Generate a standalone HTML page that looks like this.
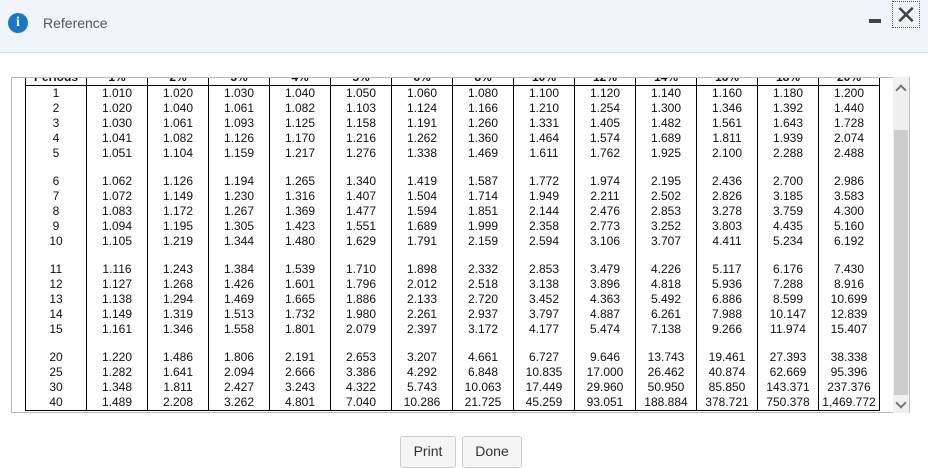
<!DOCTYPE html>
<html><head><style>
body{margin:0;width:928px;height:460px;background:#fff;font-family:"Liberation Sans",Arial,sans-serif;position:relative;overflow:hidden}
.hdr{position:absolute;left:0;top:0;width:928px;height:52px;background:#f0f5fc;border-bottom:1px solid #cfe0f2}
.ic{position:absolute;left:8px;top:13px;width:20px;height:20px;border-radius:50%;background:#1a76c8;color:#fff;font:bold 14px "Liberation Serif",serif;text-align:center;line-height:20px}
.ttl{position:absolute;left:43px;top:15px;font-size:14px;color:#555}
.min{position:absolute;left:869px;top:19px;width:12px;height:4px;background:#444}
.x{position:absolute;left:892px;top:1px;width:28px;height:27px;border:1px dotted #555;box-sizing:border-box;text-align:center;font-size:26px;line-height:26px;color:#444}
.box{position:absolute;left:11px;top:77px;width:899px;height:336px;border:1px solid #bbb;border-right:none;box-sizing:border-box;overflow:hidden}
.sb{position:absolute;left:893px;top:77px;width:17px;height:336px;background:#f0f0f0;border-right:1px solid #bbb;box-sizing:border-box}
.th{position:absolute;left:1px;top:53px;width:14px;height:265px;background:#cdcdcd}
table{position:absolute;left:13px;top:-7px;border-collapse:collapse;font-size:12px;color:#111}
td,th{width:60px;text-align:center;padding:0;border-left:1.5px solid #000;border-right:1.5px solid #000;height:15px;line-height:15px}
th{border-bottom:1.5px solid #000;height:14px;line-height:10px;vertical-align:bottom;font-weight:bold}
th span{position:relative;top:-3px}
tr.sp td{height:13px}
tr.last td{border-bottom:1.5px solid #000}
.btn{position:absolute;top:436px;height:30px;border:1px solid #ccc;border-radius:3px;background:#f5f5f5;font-size:14px;color:#333;text-align:center;line-height:28px}
.ar{position:absolute;left:4px;width:6px;height:6px;border-left:2px solid #777;border-top:2px solid #777}
</style></head><body>
<div class="hdr"><div class="ic">i</div><div class="ttl">Reference</div><div class="min"></div><div class="x">✕</div></div>
<div class="box"><table>
<tr><th><span>Periods</span></th><th><span>1%</span></th><th><span>2%</span></th><th><span>3%</span></th><th><span>4%</span></th><th><span>5%</span></th><th><span>6%</span></th><th><span>8%</span></th><th><span>10%</span></th><th><span>12%</span></th><th><span>14%</span></th><th><span>16%</span></th><th><span>18%</span></th><th><span>20%</span></th></tr>
<tr><td>1</td><td>1.010</td><td>1.020</td><td>1.030</td><td>1.040</td><td>1.050</td><td>1.060</td><td>1.080</td><td>1.100</td><td>1.120</td><td>1.140</td><td>1.160</td><td>1.180</td><td>1.200</td></tr>
<tr><td>2</td><td>1.020</td><td>1.040</td><td>1.061</td><td>1.082</td><td>1.103</td><td>1.124</td><td>1.166</td><td>1.210</td><td>1.254</td><td>1.300</td><td>1.346</td><td>1.392</td><td>1.440</td></tr>
<tr><td>3</td><td>1.030</td><td>1.061</td><td>1.093</td><td>1.125</td><td>1.158</td><td>1.191</td><td>1.260</td><td>1.331</td><td>1.405</td><td>1.482</td><td>1.561</td><td>1.643</td><td>1.728</td></tr>
<tr><td>4</td><td>1.041</td><td>1.082</td><td>1.126</td><td>1.170</td><td>1.216</td><td>1.262</td><td>1.360</td><td>1.464</td><td>1.574</td><td>1.689</td><td>1.811</td><td>1.939</td><td>2.074</td></tr>
<tr><td>5</td><td>1.051</td><td>1.104</td><td>1.159</td><td>1.217</td><td>1.276</td><td>1.338</td><td>1.469</td><td>1.611</td><td>1.762</td><td>1.925</td><td>2.100</td><td>2.288</td><td>2.488</td></tr>
<tr class="sp"><td></td><td></td><td></td><td></td><td></td><td></td><td></td><td></td><td></td><td></td><td></td><td></td><td></td><td></td></tr>
<tr><td>6</td><td>1.062</td><td>1.126</td><td>1.194</td><td>1.265</td><td>1.340</td><td>1.419</td><td>1.587</td><td>1.772</td><td>1.974</td><td>2.195</td><td>2.436</td><td>2.700</td><td>2.986</td></tr>
<tr><td>7</td><td>1.072</td><td>1.149</td><td>1.230</td><td>1.316</td><td>1.407</td><td>1.504</td><td>1.714</td><td>1.949</td><td>2.211</td><td>2.502</td><td>2.826</td><td>3.185</td><td>3.583</td></tr>
<tr><td>8</td><td>1.083</td><td>1.172</td><td>1.267</td><td>1.369</td><td>1.477</td><td>1.594</td><td>1.851</td><td>2.144</td><td>2.476</td><td>2.853</td><td>3.278</td><td>3.759</td><td>4.300</td></tr>
<tr><td>9</td><td>1.094</td><td>1.195</td><td>1.305</td><td>1.423</td><td>1.551</td><td>1.689</td><td>1.999</td><td>2.358</td><td>2.773</td><td>3.252</td><td>3.803</td><td>4.435</td><td>5.160</td></tr>
<tr><td>10</td><td>1.105</td><td>1.219</td><td>1.344</td><td>1.480</td><td>1.629</td><td>1.791</td><td>2.159</td><td>2.594</td><td>3.106</td><td>3.707</td><td>4.411</td><td>5.234</td><td>6.192</td></tr>
<tr class="sp"><td></td><td></td><td></td><td></td><td></td><td></td><td></td><td></td><td></td><td></td><td></td><td></td><td></td><td></td></tr>
<tr><td>11</td><td>1.116</td><td>1.243</td><td>1.384</td><td>1.539</td><td>1.710</td><td>1.898</td><td>2.332</td><td>2.853</td><td>3.479</td><td>4.226</td><td>5.117</td><td>6.176</td><td>7.430</td></tr>
<tr><td>12</td><td>1.127</td><td>1.268</td><td>1.426</td><td>1.601</td><td>1.796</td><td>2.012</td><td>2.518</td><td>3.138</td><td>3.896</td><td>4.818</td><td>5.936</td><td>7.288</td><td>8.916</td></tr>
<tr><td>13</td><td>1.138</td><td>1.294</td><td>1.469</td><td>1.665</td><td>1.886</td><td>2.133</td><td>2.720</td><td>3.452</td><td>4.363</td><td>5.492</td><td>6.886</td><td>8.599</td><td>10.699</td></tr>
<tr><td>14</td><td>1.149</td><td>1.319</td><td>1.513</td><td>1.732</td><td>1.980</td><td>2.261</td><td>2.937</td><td>3.797</td><td>4.887</td><td>6.261</td><td>7.988</td><td>10.147</td><td>12.839</td></tr>
<tr><td>15</td><td>1.161</td><td>1.346</td><td>1.558</td><td>1.801</td><td>2.079</td><td>2.397</td><td>3.172</td><td>4.177</td><td>5.474</td><td>7.138</td><td>9.266</td><td>11.974</td><td>15.407</td></tr>
<tr class="sp"><td></td><td></td><td></td><td></td><td></td><td></td><td></td><td></td><td></td><td></td><td></td><td></td><td></td><td></td></tr>
<tr><td>20</td><td>1.220</td><td>1.486</td><td>1.806</td><td>2.191</td><td>2.653</td><td>3.207</td><td>4.661</td><td>6.727</td><td>9.646</td><td>13.743</td><td>19.461</td><td>27.393</td><td>38.338</td></tr>
<tr><td>25</td><td>1.282</td><td>1.641</td><td>2.094</td><td>2.666</td><td>3.386</td><td>4.292</td><td>6.848</td><td>10.835</td><td>17.000</td><td>26.462</td><td>40.874</td><td>62.669</td><td>95.396</td></tr>
<tr><td>30</td><td>1.348</td><td>1.811</td><td>2.427</td><td>3.243</td><td>4.322</td><td>5.743</td><td>10.063</td><td>17.449</td><td>29.960</td><td>50.950</td><td>85.850</td><td>143.371</td><td>237.376</td></tr>
<tr class="last"><td>40</td><td>1.489</td><td>2.208</td><td>3.262</td><td>4.801</td><td>7.040</td><td>10.286</td><td>21.725</td><td>45.259</td><td>93.051</td><td>188.884</td><td>378.721</td><td>750.378</td><td>1,469.772</td></tr>
</table></div>
<div class="sb"><div class="ar" style="top:9px;transform:rotate(45deg)"></div><div class="th"></div><div class="ar" style="top:322px;transform:rotate(225deg)"></div></div>
<div class="btn" style="left:400px;width:54px">Print</div>
<div class="btn" style="left:462px;width:58px">Done</div>
</body></html>
